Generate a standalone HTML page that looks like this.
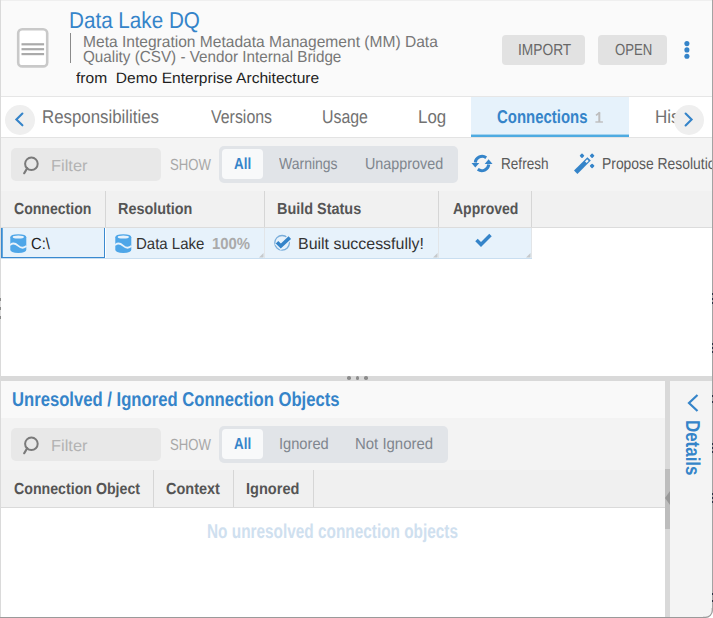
<!DOCTYPE html>
<html><head><meta charset="utf-8"><style>
html,body{margin:0;padding:0;width:713px;height:618px;overflow:hidden;background:#fff;}
body{position:relative;font-family:"Liberation Sans",sans-serif;}
body>div,body>svg,body>span{position:absolute;}
.t{position:absolute;white-space:pre;transform-origin:0 0;text-rendering:geometricPrecision;}
</style></head><body>
<div style="left:0px;top:0px;width:713px;height:96px;background:#fafafa;"></div>
<div style="left:0px;top:96px;width:713px;height:1px;background:#e6e6e6;"></div>
<div style="left:0px;top:97px;width:713px;height:40px;background:#ffffff;"></div>
<div style="left:0px;top:137px;width:713px;height:1px;background:#e3e3e3;"></div>
<div style="left:0px;top:138px;width:713px;height:53px;background:#f4f4f4;"></div>
<div style="left:0px;top:191px;width:713px;height:36px;background:#f1f1f1;"></div>
<div style="left:0px;top:227px;width:713px;height:1px;background:#dcdcdc;"></div>
<div style="left:0px;top:228px;width:713px;height:148px;background:#ffffff;"></div>
<div style="left:0px;top:376px;width:713px;height:5px;background:#d9d9d9;"></div>
<div style="left:0px;top:381px;width:665px;height:37px;background:#f9f9f9;"></div>
<div style="left:0px;top:418px;width:665px;height:52px;background:#f3f3f3;"></div>
<div style="left:0px;top:470px;width:665px;height:37px;background:#f0f0f0;"></div>
<div style="left:0px;top:507px;width:665px;height:1px;background:#dadada;"></div>
<div style="left:0px;top:508px;width:665px;height:110px;background:#ffffff;"></div>
<div style="left:665px;top:381px;width:5px;height:237px;background:#d9d9d9;"></div>
<div style="left:665px;top:469px;width:5px;height:60px;background:#bdbdbd;"></div>
<div style="left:670px;top:381px;width:43px;height:237px;background:#f4f4f4;"></div>
<svg style="left:0;top:0" width="60" height="80"><rect x="18.2" y="29.2" width="29" height="37.2" rx="4" fill="#fff" stroke="#c9c9c9" stroke-width="2.6"/><g fill="#aaaaaa"><rect x="21.5" y="43.2" width="22.6" height="2.2"/><rect x="21.5" y="48.1" width="22.6" height="2.2"/><rect x="21.5" y="53" width="22.6" height="2.2"/></g></svg>
<div style="left:70px;top:33px;width:1px;height:30px;background:#8a8a8a;"></div>
<span class="t" style="left:69.40px;top:9px;font-size:23px;line-height:23px;font-weight:normal;color:#3584c9;transform:scaleX(0.8979);">Data Lake DQ</span>
<span class="t" style="left:82.70px;top:35px;font-size:16px;line-height:16px;font-weight:normal;color:#777777;transform:scaleX(0.9731);">Meta Integration Metadata Management (MM) Data</span>
<span class="t" style="left:82.70px;top:50px;font-size:16px;line-height:16px;font-weight:normal;color:#777777;transform:scaleX(0.9525);">Quality (CSV) - Vendor Internal Bridge</span>
<span class="t" style="left:75.80px;top:71px;font-size:15px;line-height:15px;font-weight:normal;color:#1e1e1e;transform:scaleX(1.0380);">from  Demo Enterprise Architecture</span>
<div style="left:502px;top:35px;width:83px;height:30px;background:#e2e2e2;border-radius:4px;"></div>
<div style="left:598px;top:35px;width:69px;height:30px;background:#e2e2e2;border-radius:4px;"></div>
<span class="t" style="left:518.00px;top:43px;font-size:16px;line-height:16px;font-weight:normal;color:#686868;transform:scaleX(0.8593);">IMPORT</span>
<span class="t" style="left:614.80px;top:43px;font-size:16px;line-height:16px;font-weight:normal;color:#686868;transform:scaleX(0.8218);">OPEN</span>
<svg style="left:680px;top:36px" width="14" height="26"><g fill="#3584c9"><circle cx="6.9" cy="7.6" r="2.55"/><circle cx="6.9" cy="13.9" r="2.55"/><circle cx="6.9" cy="20.2" r="2.55"/></g></svg>
<div style="left:5px;top:105px;width:30px;height:30px;border-radius:50%;background:#efefef"></div>
<svg style="left:0;top:0" width="713" height="140"><polyline points="22.4,113.6 16.4,119.4 22.4,125.3" fill="none" stroke="#3584c9" stroke-width="2.1" stroke-linecap="round"/></svg>
<div style="left:471px;top:97px;width:158px;height:37px;background:#e6f2fb;"></div>
<div style="left:471px;top:134px;width:158px;height:1px;background:#a4d3ef;"></div>
<div style="left:471px;top:135px;width:158px;height:2px;background:#4eabe1;"></div>
<span class="t" style="left:42.10px;top:108px;font-size:18.5px;line-height:18.5px;font-weight:normal;color:#727272;transform:scaleX(0.9098);">Responsibilities</span>
<span class="t" style="left:210.80px;top:108px;font-size:18.5px;line-height:18.5px;font-weight:normal;color:#727272;transform:scaleX(0.8607);">Versions</span>
<span class="t" style="left:321.60px;top:108px;font-size:18.5px;line-height:18.5px;font-weight:normal;color:#727272;transform:scaleX(0.8591);">Usage</span>
<span class="t" style="left:418.00px;top:108px;font-size:18.5px;line-height:18.5px;font-weight:normal;color:#727272;transform:scaleX(0.9131);">Log</span>
<span class="t" style="left:496.50px;top:108px;font-size:18.5px;line-height:18.5px;font-weight:bold;color:#3584c9;transform:scaleX(0.8072);">Connections</span>
<svg style="left:590px;top:108px" width="16" height="18"><g fill="none" stroke="#bdbdbd"><line x1="9.3" y1="4.2" x2="9.3" y2="14" stroke-width="2.0"/><line x1="9.8" y1="4.5" x2="6" y2="7.4" stroke-width="1.6"/><line x1="5.4" y1="14" x2="12.9" y2="14" stroke-width="1.4"/></g></svg>
<span class="t" style="left:654.50px;top:108px;font-size:18.5px;line-height:18.5px;font-weight:normal;color:#727272;transform:scaleX(0.92);">His</span>
<div style="left:673.8px;top:104.8px;width:30px;height:30px;border-radius:50%;background:#efefef"></div>
<svg style="left:0;top:0" width="713" height="140"><polyline points="685.6,113.6 691.6,119.5 685.6,125.4" fill="none" stroke="#3584c9" stroke-width="2.1" stroke-linecap="round"/></svg>
<div style="left:11px;top:148px;width:150px;height:33px;background:#e8e8e8;border-radius:5px;"></div>
<svg style="left:21px;top:155px" width="22" height="22"><circle cx="10.4" cy="8.8" r="6.3" fill="none" stroke="#7a7a7a" stroke-width="2"/><line x1="6.2" y1="13.2" x2="3.2" y2="18.2" stroke="#7a7a7a" stroke-width="2.2" stroke-linecap="round"/></svg>
<span class="t" style="left:50.90px;top:159px;font-size:16px;line-height:16px;font-weight:normal;color:#b3b3b3;transform:scaleX(1.0263);">Filter</span>
<span class="t" style="left:170.10px;top:158px;font-size:16px;line-height:16px;font-weight:normal;color:#a8a8a8;transform:scaleX(0.8221);">SHOW</span>
<div style="left:219px;top:146px;width:239px;height:37px;background:#e1e4e8;border-radius:5px;"></div>
<div style="left:222px;top:149px;width:41px;height:30px;background:#f8f9fa;border-radius:4px;"></div>
<span class="t" style="left:234.00px;top:157px;font-size:16px;line-height:16px;font-weight:bold;color:#3584c9;transform:scaleX(0.8362);">All</span>
<span class="t" style="left:279.00px;top:157px;font-size:16px;line-height:16px;font-weight:normal;color:#7f868e;transform:scaleX(0.8747);">Warnings</span>
<span class="t" style="left:365.00px;top:157px;font-size:16px;line-height:16px;font-weight:normal;color:#7f868e;transform:scaleX(0.8961);">Unapproved</span>
<svg style="left:466px;top:148px" width="32" height="31" viewBox="0 0 32 31"><path d="M20.2 9.7 A7 7 0 0 0 9.2 14.5" fill="none" stroke="#3584c9" stroke-width="3"/><polygon points="5.5,15 13.3,15 9.3,19.6" fill="#3584c9"/><path d="M11.8 21.3 A7 7 0 0 0 22.8 16.5" fill="none" stroke="#3584c9" stroke-width="3"/><polygon points="18.7,16 26.5,16 22.6,11.3" fill="#3584c9"/></svg>
<span class="t" style="left:500.90px;top:157px;font-size:16px;line-height:16px;font-weight:normal;color:#5a5a5a;transform:scaleX(0.8491);">Refresh</span>
<svg style="left:568px;top:148px" width="32" height="32" viewBox="0 0 32 32"><line x1="7.7" y1="24.3" x2="21.1" y2="10.9" stroke="#3584c9" stroke-width="4.8"/><line x1="17.8" y1="14.2" x2="19.9" y2="12.1" stroke="#f4f4f4" stroke-width="2.2"/><g fill="#3584c9"><rect x="12.2" y="6" width="3.6" height="3.6" rx="0.8" transform="rotate(45 14 7.8)"/><rect x="22.3" y="6" width="3.6" height="3.6" rx="0.8" transform="rotate(45 24.1 7.8)"/><rect x="22.3" y="16.1" width="3.6" height="3.6" rx="0.8" transform="rotate(45 24.1 17.9)"/></g></svg>
<span class="t" style="left:601.90px;top:157px;font-size:16px;line-height:16px;font-weight:normal;color:#5a5a5a;transform:scaleX(0.868);">Propose Resolution</span>
<div style="left:105px;top:191px;width:1px;height:36px;background:#d6d6d6;"></div>
<div style="left:264px;top:191px;width:1px;height:36px;background:#d6d6d6;"></div>
<div style="left:438px;top:191px;width:1px;height:36px;background:#d6d6d6;"></div>
<div style="left:531px;top:191px;width:1px;height:36px;background:#d6d6d6;"></div>
<span class="t" style="left:13.60px;top:202px;font-size:16px;line-height:16px;font-weight:bold;color:#555555;transform:scaleX(0.8796);">Connection</span>
<span class="t" style="left:118.30px;top:202px;font-size:16px;line-height:16px;font-weight:bold;color:#555555;transform:scaleX(0.8999);">Resolution</span>
<span class="t" style="left:276.90px;top:202px;font-size:16px;line-height:16px;font-weight:bold;color:#555555;transform:scaleX(0.9016);">Build Status</span>
<span class="t" style="left:452.80px;top:202px;font-size:16px;line-height:16px;font-weight:bold;color:#555555;transform:scaleX(0.8756);">Approved</span>
<div style="left:1px;top:228px;width:530px;height:30px;background:#e7f2fb;"></div>
<div style="left:1px;top:258px;width:531px;height:1px;background:#c9def0;"></div>
<div style="left:105px;top:228px;width:1px;height:30px;background:#ffffff;"></div>
<div style="left:264px;top:228px;width:1px;height:30px;background:#e2e5e8;"></div>
<div style="left:438px;top:228px;width:1px;height:30px;background:#e2e5e8;"></div>
<div style="left:531px;top:228px;width:1px;height:30px;background:#e2e5e8;"></div>
<div style="left:1px;top:228px;width:1px;height:30px;background:#3a8ad0;"></div>
<div style="left:2px;top:228px;width:1px;height:30px;background:#62a7de;"></div>
<div style="left:1px;top:257px;width:104px;height:1px;background:#3a8ad0;"></div>
<div style="left:104px;top:228px;width:1px;height:30px;background:#3a8ad0;"></div>
<svg style="left:10px;top:234px" width="17" height="19" viewBox="0 0 17 19"><path d="M0.3 3.3 Q0.3 0.2 8.3 0.2 Q16.3 0.2 16.3 3.3 L16.3 15.8 Q16.3 18.9 8.3 18.9 Q0.3 18.9 0.3 15.8 Z" fill="#4ea6e8"/><ellipse cx="8.3" cy="3" rx="5.6" ry="1.5" fill="#e7f2fb"/><path d="M0 11.2 Q3.5 7.6 8 11.6 Q12.5 15.6 16.6 12" fill="none" stroke="#e7f2fb" stroke-width="1.8"/></svg>
<span class="t" style="left:30.60px;top:237px;font-size:16px;line-height:16px;font-weight:normal;color:#222222;transform:scaleX(0.9220);">C:\</span>
<svg style="left:115px;top:234px" width="17" height="19" viewBox="0 0 17 19"><path d="M0.3 3.3 Q0.3 0.2 8.3 0.2 Q16.3 0.2 16.3 3.3 L16.3 15.8 Q16.3 18.9 8.3 18.9 Q0.3 18.9 0.3 15.8 Z" fill="#4ea6e8"/><ellipse cx="8.3" cy="3" rx="5.6" ry="1.5" fill="#e7f2fb"/><path d="M0 11.2 Q3.5 7.6 8 11.6 Q12.5 15.6 16.6 12" fill="none" stroke="#e7f2fb" stroke-width="1.8"/></svg>
<span class="t" style="left:136.30px;top:237px;font-size:16px;line-height:16px;font-weight:normal;color:#333333;transform:scaleX(0.9375);">Data Lake</span>
<span class="t" style="left:211.80px;top:237px;font-size:16px;line-height:16px;font-weight:bold;color:#aaaaaa;transform:scaleX(0.9298);">100%</span>
<svg style="left:273px;top:234px" width="19" height="18" viewBox="0 0 19 18"><circle cx="9.1" cy="8.8" r="7.3" fill="none" stroke="#7aaedb" stroke-width="1.3"/><path d="M4 8.3 L7.8 12.1 L16.8 3.6" fill="none" stroke="#e7f2fb" stroke-width="6"/><path d="M4 8.3 L7.8 12.1 L16.8 3.6" fill="none" stroke="#3584c9" stroke-width="3.6"/></svg>
<span class="t" style="left:297.70px;top:237px;font-size:16px;line-height:16px;font-weight:normal;color:#333333;transform:scaleX(0.9971);">Built successfully!</span>
<svg style="left:474px;top:232px" width="20" height="16" viewBox="0 0 20 16"><path d="M2.5 8 L7 12.5 L16.5 3" fill="none" stroke="#3584c9" stroke-width="3.5"/></svg>
<svg style="left:259px;top:253px" width="4.5" height="4.5"><polygon points="4.5,0 4.5,4.5 0,4.5" fill="#c6c9cc"/></svg>
<svg style="left:433px;top:253px" width="4.5" height="4.5"><polygon points="4.5,0 4.5,4.5 0,4.5" fill="#c6c9cc"/></svg>
<svg style="left:526px;top:253px" width="4.5" height="4.5"><polygon points="4.5,0 4.5,4.5 0,4.5" fill="#c6c9cc"/></svg>
<div style="left:347.2px;top:376.2px;width:3.6px;height:3.6px;border-radius:50%;background:#8c8c8c"></div>
<div style="left:355.7px;top:376.2px;width:3.6px;height:3.6px;border-radius:50%;background:#8c8c8c"></div>
<div style="left:364.2px;top:376.2px;width:3.6px;height:3.6px;border-radius:50%;background:#8c8c8c"></div>
<span class="t" style="left:11.70px;top:390px;font-size:20px;line-height:20px;font-weight:bold;color:#3584c9;transform:scaleX(0.8325);">Unresolved / Ignored Connection Objects</span>
<div style="left:11px;top:428px;width:150px;height:33px;background:#e8e8e8;border-radius:5px;"></div>
<svg style="left:21px;top:435px" width="22" height="22"><circle cx="10.4" cy="8.8" r="6.3" fill="none" stroke="#7a7a7a" stroke-width="2"/><line x1="6.2" y1="13.2" x2="3.2" y2="18.2" stroke="#7a7a7a" stroke-width="2.2" stroke-linecap="round"/></svg>
<span class="t" style="left:50.90px;top:439px;font-size:16px;line-height:16px;font-weight:normal;color:#b3b3b3;transform:scaleX(1.0263);">Filter</span>
<span class="t" style="left:170.10px;top:438px;font-size:16px;line-height:16px;font-weight:normal;color:#a8a8a8;transform:scaleX(0.8221);">SHOW</span>
<div style="left:219px;top:426px;width:229px;height:37px;background:#e1e4e8;border-radius:5px;"></div>
<div style="left:222px;top:429px;width:41px;height:30px;background:#f8f9fa;border-radius:4px;"></div>
<span class="t" style="left:234.00px;top:437px;font-size:16px;line-height:16px;font-weight:bold;color:#3584c9;transform:scaleX(0.8362);">All</span>
<span class="t" style="left:278.60px;top:437px;font-size:16px;line-height:16px;font-weight:normal;color:#7f868e;transform:scaleX(0.9160);">Ignored</span>
<span class="t" style="left:355.00px;top:437px;font-size:16px;line-height:16px;font-weight:normal;color:#7f868e;transform:scaleX(0.9337);">Not Ignored</span>
<div style="left:153px;top:470px;width:1px;height:37px;background:#d6d6d6;"></div>
<div style="left:233px;top:470px;width:1px;height:37px;background:#d6d6d6;"></div>
<div style="left:313px;top:470px;width:1px;height:37px;background:#d6d6d6;"></div>
<span class="t" style="left:13.60px;top:482px;font-size:16px;line-height:16px;font-weight:bold;color:#555555;transform:scaleX(0.8861);">Connection Object</span>
<span class="t" style="left:165.90px;top:482px;font-size:16px;line-height:16px;font-weight:bold;color:#555555;transform:scaleX(0.9046);">Context</span>
<span class="t" style="left:245.60px;top:482px;font-size:16px;line-height:16px;font-weight:bold;color:#555555;transform:scaleX(0.9103);">Ignored</span>
<span class="t" style="left:207.10px;top:522px;font-size:20px;line-height:20px;font-weight:bold;color:#cfe0ef;transform:scaleX(0.7683);">No unresolved connection objects</span>
<svg style="left:665px;top:491px" width="5" height="14"><polygon points="5,0 5,14 0,7" fill="#999"/></svg>
<svg style="left:684px;top:390px" width="18" height="24"><polyline points="13.5,5 5,13 13.5,21" fill="none" stroke="#3584c9" stroke-width="2.2"/></svg>
<span class="t" style="left:701.5px;top:419.6px;font-size:20px;line-height:20px;font-weight:bold;color:#3584c9;transform-origin:0 0;transform:rotate(90deg) scaleX(0.845)">Details</span>
<div style="left:0px;top:0px;width:713px;height:1px;background:#efefef;"></div>
<div style="left:0px;top:0px;width:1px;height:618px;background:#dadada;"></div>
<div style="left:712px;top:0px;width:1px;height:618px;background:#a3a3a3;"></div>
<div style="left:0px;top:617px;width:713px;height:1px;background:#9a9a9a;"></div>
<div style="left:0px;top:298.2px;width:1px;height:3.0px;background:#8a8a8a;"></div>
<div style="left:0px;top:307.0px;width:1px;height:3.0px;background:#8a8a8a;"></div>
<div style="left:0px;top:315.6px;width:1px;height:3.0px;background:#8a8a8a;"></div>
<div style="left:712px;top:293.3px;width:1px;height:2.0px;background:#2a3244;"></div>
<div style="left:712px;top:297.8px;width:1px;height:2.0px;background:#2a3244;"></div>
<div style="left:712px;top:302px;width:1px;height:2px;background:#2a3244;"></div>
<div style="left:712px;top:343.3px;width:1px;height:2.0px;background:#2a3244;"></div>
<div style="left:712px;top:347px;width:1px;height:2px;background:#2a3244;"></div>
<div style="left:712px;top:351px;width:1px;height:2px;background:#2a3244;"></div>
<div style="left:712px;top:395px;width:1px;height:2px;background:#2a3244;"></div>
<div style="left:712px;top:400.7px;width:1px;height:2.0px;background:#2a3244;"></div>
<div style="left:712px;top:442.8px;width:1px;height:2.0px;background:#2a3244;"></div>
<div style="left:712px;top:446.8px;width:1px;height:2.0px;background:#2a3244;"></div>
<div style="left:712px;top:450.8px;width:1px;height:2.0px;background:#2a3244;"></div>
<div style="left:712px;top:492.6px;width:1px;height:2.0px;background:#2a3244;"></div>
<div style="left:712px;top:496.5px;width:1px;height:2.0px;background:#2a3244;"></div>
<div style="left:712px;top:500.5px;width:1px;height:2.0px;background:#2a3244;"></div>
<div style="left:712px;top:592.8px;width:1px;height:2.0px;background:#2a3244;"></div>
<div style="left:712px;top:599.9px;width:1px;height:2.0px;background:#2a3244;"></div>
<svg style="left:703px;top:608px" width="10" height="10"><path d="M9.5 0 L9.5 2.5 A7 7 0 0 1 2.5 9.5 L0 9.5 L0 10 L10 10 L10 0 Z" fill="#ffffff"/><path d="M9.3 0 L9.3 2.5 A6.8 6.8 0 0 1 2.5 9.3 L0 9.3" fill="none" stroke="#9a9a9a" stroke-width="1.2"/></svg>
</body></html>
